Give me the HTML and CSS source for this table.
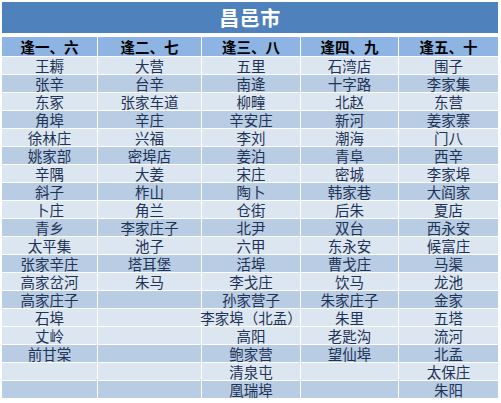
FILE: index.html
```html
<!DOCTYPE html>
<html lang="zh">
<head>
<meta charset="utf-8">
<link rel="stylesheet" href="styles.css">
</head>
<body>
<div class="sheet">
  <div class="title">昌邑市</div>
  <div class="row head"><div>逢一、六</div><div>逢二、七</div><div>逢三、八</div><div>逢四、九</div><div>逢五、十</div></div>
  <div class="row a"><div>王耨</div><div>大营</div><div>五里</div><div>石湾店</div><div>围子</div></div>
  <div class="row b"><div>张辛</div><div>台辛</div><div>南逄</div><div>十字路</div><div>李家集</div></div>
  <div class="row a"><div>东冢</div><div>张家车道</div><div>柳疃</div><div>北赵</div><div>东营</div></div>
  <div class="row b"><div>角埠</div><div>辛庄</div><div>辛安庄</div><div>新河</div><div>姜家寨</div></div>
  <div class="row a"><div>徐林庄</div><div>兴福</div><div>李刘</div><div>潮海</div><div>门八</div></div>
  <div class="row b"><div>姚家部</div><div>密埠店</div><div>姜泊</div><div>青阜</div><div>西辛</div></div>
  <div class="row a"><div>辛隅</div><div>大姜</div><div>宋庄</div><div>密城</div><div>李家埠</div></div>
  <div class="row b"><div>斜子</div><div>柞山</div><div>陶卜</div><div>韩家巷</div><div>大阎家</div></div>
  <div class="row a"><div>卜庄</div><div>角兰</div><div>仓街</div><div>后朱</div><div>夏店</div></div>
  <div class="row b"><div>青乡</div><div>李家庄子</div><div>北尹</div><div>双台</div><div>西永安</div></div>
  <div class="row a"><div>太平集</div><div>池子</div><div>六甲</div><div>东永安</div><div>候富庄</div></div>
  <div class="row b"><div>张家辛庄</div><div>塔耳堡</div><div>活埠</div><div>曹戈庄</div><div>马渠</div></div>
  <div class="row a"><div>高家岔河</div><div>朱马</div><div>李戈庄</div><div>饮马</div><div>龙池</div></div>
  <div class="row b"><div>高家庄子</div><div></div><div>孙家营子</div><div>朱家庄子</div><div>金家</div></div>
  <div class="row a"><div>石埠</div><div></div><div>李家埠（北孟）</div><div>朱里</div><div>五塔</div></div>
  <div class="row a"><div>丈岭</div><div></div><div>高阳</div><div>老匙沟</div><div>流河</div></div>
  <div class="row b"><div>前甘棠</div><div></div><div>鲍家营</div><div>望仙埠</div><div>北孟</div></div>
  <div class="row a"><div></div><div></div><div>清泉屯</div><div></div><div>太保庄</div></div>
  <div class="row b"><div></div><div></div><div>凰瑞埠</div><div></div><div>朱阳</div></div>
</div>
</body>
</html>
```

FILE: styles.css
```css
html, body {
  margin: 0;
  padding: 0;
  background: #ffffff;
}
body {
  padding: 2px 0 0 2px;
  font-family: "Noto Sans CJK SC", "Noto Sans", sans-serif;
}
.sheet {
  width: 496px;
  display: flex;
  flex-direction: column;
  gap: 1px;
  background: #ffffff;
}
.title {
  height: 31px;
  margin-bottom: 3px;
  background: #4f81bd;
  color: #ffffff;
  font-weight: bold;
  font-size: 20px;
  line-height: 31px;
  text-align: center;
  letter-spacing: 0.5px;
}
.row {
  display: grid;
  grid-template-columns: 95px 103px 98px 97px 99px;
  column-gap: 1px;
  height: 17px;
}
.row > div {
  display: flex;
  align-items: center;
  justify-content: center;
  font-size: 14.5px;
  line-height: 17px;
  white-space: nowrap;
  overflow: visible;
  color: #1f3355;
}
.head {
  height: 19px;
}
.head > div {
  background: #8db4e2;
  color: #000000;
  font-weight: bold;
  line-height: 19px;
}
.a > div {
  background: #dce6f1;
}
.b > div {
  background: #b8cce4;
}
```
